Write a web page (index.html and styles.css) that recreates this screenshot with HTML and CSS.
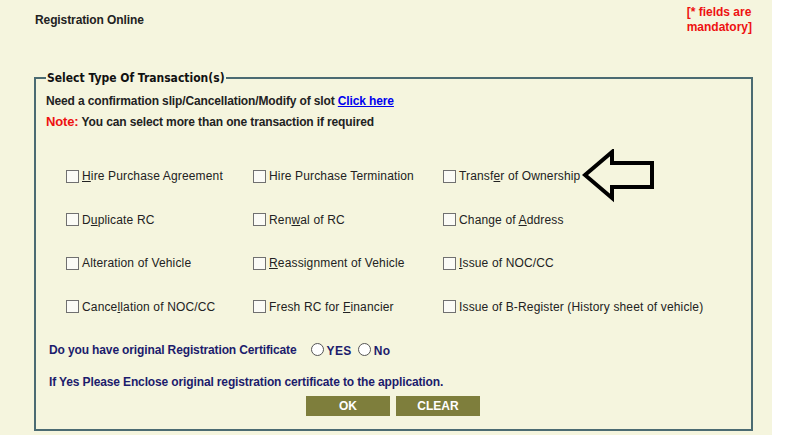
FILE: index.html
```html
<!DOCTYPE html>
<html>
<head>
<meta charset="utf-8">
<link rel="stylesheet" href="styles.css">
</head>
<body>
<div class="page">
  <div class="header">
    <div class="title">Registration Online</div>
    <div class="mandatory">[* fields are<br>mandatory]</div>
  </div>
  <fieldset class="box">
    <legend class="legend">Select Type Of Transaction(s)</legend>
    <div class="line">Need a confirmation slip/Cancellation/Modify of slot <a href="#" class="link">Click here</a></div>
    <div class="line note-line"><span class="note">Note:</span> You can select more than one transaction if required</div>
    <div class="grid">
      <label class="opt"><input type="checkbox" class="cb"><span><u>H</u>ire Purchase Agreement</span></label>
      <label class="opt"><input type="checkbox" class="cb"><span>Hire Purchase Termination</span></label>
      <label class="opt"><input type="checkbox" class="cb"><span>Transf<u>e</u>r of Ownership</span>
        <svg class="arrow" width="74" height="54" viewBox="0 0 74 54"><polygon points="3,26 30,3 30,14 70,14 70,38 30,38 30,49" fill="none" stroke="#000" stroke-width="4" stroke-linejoin="miter"/></svg>
      </label>
      <label class="opt"><input type="checkbox" class="cb"><span>D<u>u</u>plicate RC</span></label>
      <label class="opt"><input type="checkbox" class="cb"><span>Ren<u>w</u>al of RC</span></label>
      <label class="opt"><input type="checkbox" class="cb"><span>Change of <u>A</u>ddress</span></label>
      <label class="opt"><input type="checkbox" class="cb"><span>Alteration of Vehicle</span></label>
      <label class="opt"><input type="checkbox" class="cb"><span><u>R</u>eassignment of Vehicle</span></label>
      <label class="opt"><input type="checkbox" class="cb"><span><u>I</u>ssue of NOC/CC</span></label>
      <label class="opt"><input type="checkbox" class="cb"><span>Cance<u>l</u>lation of NOC/CC</span></label>
      <label class="opt"><input type="checkbox" class="cb"><span>Fresh RC for <u>F</u>inancier</span></label>
      <label class="opt"><input type="checkbox" class="cb"><span>Issue of B-Register (History sheet of vehicle)</span></label>
    </div>
    <div class="question">
      <span class="q-text">Do you have original Registration Certificate</span>
      <label class="radio"><input type="radio" name="rc" class="rb"><span>YES</span></label>
      <label class="radio"><input type="radio" name="rc" class="rb"><span>No</span></label>
    </div>
    <div class="enclose">If Yes Please Enclose original registration certificate to the application.</div>
    <div class="buttons">
      <button class="btn btn-ok">OK</button>
      <button class="btn btn-clear">CLEAR</button>
    </div>
  </fieldset>
</div>
</body>
</html>
```
FILE: styles.css
```css
html, body {
  margin: 0;
  padding: 0;
  background: #ffffff;
}
body {
  font-family: "Liberation Sans", Arial, sans-serif;
  font-size: 12px;
  color: #222;
}
.page {
  width: 772px;
  height: 435px;
  background: #f5f5de;
  overflow: hidden;
  box-sizing: border-box;
  padding: 0 0 0 34px;
}
.header {
  display: flex;
  justify-content: space-between;
  height: 71px;
  padding: 5px 20px 0 1px;
  box-sizing: border-box;
  width: 738px;
}
.title {
  font-weight: bold;
  padding-top: 8px;
  letter-spacing: -0.1px;
}
.mandatory {
  color: #ee1111;
  font-weight: bold;
  line-height: 15px;
}
.box {
  margin: 0;
  width: 719px;
  height: 360px;
  box-sizing: border-box;
  border: 2px solid #4b6b72;
  padding: 0 0 0 10px;
  min-width: 0;
}
.legend {
  font-weight: bold;
  font-size: 12px;
  font-family: "DejaVu Sans Condensed", "DejaVu Sans", Verdana, sans-serif;
  font-stretch: condensed;
  padding: 0 1px;
  color: #111;
}
.line {
  font-weight: bold;
  line-height: 16px;
  margin-top: 8px;
  letter-spacing: -0.13px;
}
.note-line {
  margin-top: 5px;
}
.note {
  color: #ee1111;
  font-size: 13px;
}
.link {
  color: #0000ee;
}
.grid {
  display: grid;
  grid-template-columns: 187px 190px 1fr;
  grid-auto-rows: 43.5px;
  margin-top: 38px;
  padding-left: 20px;
  letter-spacing: 0.15px;
}
.opt {
  display: flex;
  align-items: center;
  position: relative;
  height: 16px;
}
.cb {
  appearance: none;
  -webkit-appearance: none;
  width: 13px;
  height: 13px;
  margin: 0 3px 0 0;
  border: 1px solid #707070;
  background: #fbfbf6;
  box-sizing: border-box;
}
.arrow {
  position: absolute;
  left: 139px;
  top: -19px;
}
.question {
  display: flex;
  align-items: center;
  color: #1c1c6c;
  font-weight: bold;
  margin-top: -1px;
  padding-left: 3px;
  letter-spacing: -0.13px;
}
.q-text {
  margin-right: 14px;
}
.radio {
  display: flex;
  align-items: center;
  margin-right: 6px;
}
.radio span {
  margin-top: 3px;
  letter-spacing: 0.4px;
}
.rb {
  appearance: none;
  -webkit-appearance: none;
  width: 13px;
  height: 13px;
  border-radius: 50%;
  border: 1px solid #555;
  background: #fff;
  margin: 0 3px 0 0;
  box-sizing: border-box;
}
.enclose {
  color: #1c1c6c;
  font-weight: bold;
  margin-top: 17px;
  padding-left: 3px;
  letter-spacing: -0.13px;
}
.buttons {
  display: flex;
  gap: 6px;
  margin: 7px 0 0 260px;
}
.btn {
  background: #7e7e3c;
  color: #fff;
  font-family: "Liberation Sans", Arial, sans-serif;
  font-weight: bold;
  font-size: 12px;
  border: none;
  height: 20px;
  width: 84px;
  padding: 0;
}
```
